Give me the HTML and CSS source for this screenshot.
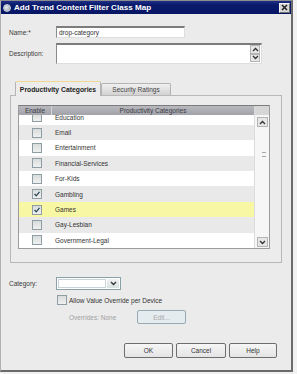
FILE: index.html
```html
<!DOCTYPE html>
<html lang="en">
<head>
    <meta charset="UTF-8">
    <title>Add Trend Content Filter Class Map</title>
    <link rel="stylesheet" href="styles.css">
</head>
<body>
    <div class="window">
        <div class="titlebar">
            <span class="app-icon"></span>
            <span class="title">Add Trend Content Filter Class Map</span>
            <span class="close-btn">
                <svg width="7" height="7" viewBox="0 0 7 7"><path d="M1 1 L6 6 M6 1 L1 6" stroke="#222" stroke-width="1.6"/></svg>
            </span>
        </div>

        <div class="content">
            <div class="field name-row">
                <span class="field-label">Name:*</span>
                <div class="text-input">drop-category</div>
            </div>

            <div class="field desc-row">
                <span class="field-label">Description:</span>
                <div class="text-area">
                    <div class="spin">
                        <span class="spin-btn">
                            <svg width="7" height="5" viewBox="0 0 7 5"><path d="M1 4 L3.5 1.5 L6 4" fill="none" stroke="#333" stroke-width="1.3"/></svg>
                        </span>
                        <span class="spin-btn">
                            <svg width="7" height="5" viewBox="0 0 7 5"><path d="M1 1 L3.5 3.5 L6 1" fill="none" stroke="#333" stroke-width="1.3"/></svg>
                        </span>
                    </div>
                </div>
            </div>

            <!-- Tabs -->
            <div class="tab-strip">
                <div class="tab active">Productivity Categories</div>
                <div class="tab">Security Ratings</div>
            </div>
            <div class="tab-panel">
                <div class="grid">
                    <div class="list-col">
                        <div class="grid-head">
                            <div class="head-enable">Enable</div>
                            <div class="head-name">Productivity Categories</div>
                        </div>
                        <div class="rows">
                            <div class="row first"><span class="cell-check"><span class="check"></span></span><span class="cell-name">Education</span></div>
                            <div class="row alt"><span class="cell-check"><span class="check"></span></span><span class="cell-name">Email</span></div>
                            <div class="row"><span class="cell-check"><span class="check"></span></span><span class="cell-name">Entertainment</span></div>
                            <div class="row alt"><span class="cell-check"><span class="check"></span></span><span class="cell-name">Financial-Services</span></div>
                            <div class="row"><span class="cell-check"><span class="check"></span></span><span class="cell-name">For-Kids</span></div>
                            <div class="row alt"><span class="cell-check"><span class="check checked"><svg width="8" height="8" viewBox="0 0 8 8"><path d="M1.5 4 L3.3 5.8 L6.5 1.8" fill="none" stroke="#2b4a5a" stroke-width="1.3"/></svg></span></span><span class="cell-name">Gambling</span></div>
                            <div class="row selected"><span class="cell-check"><span class="check checked"><svg width="8" height="8" viewBox="0 0 8 8"><path d="M1.5 4 L3.3 5.8 L6.5 1.8" fill="none" stroke="#2b4a5a" stroke-width="1.3"/></svg></span></span><span class="cell-name">Games</span></div>
                            <div class="row alt"><span class="cell-check"><span class="check"></span></span><span class="cell-name">Gay-Lesbian</span></div>
                            <div class="row"><span class="cell-check"><span class="check"></span></span><span class="cell-name">Government-Legal</span></div>
                        </div>
                    </div>
                    <div class="scroll-col">
                        <div class="scroll-corner"></div>
                        <div class="scrollbar">
                            <span class="scroll-btn">
                                <svg width="7" height="5" viewBox="0 0 7 5"><path d="M1 4 L3.5 1.5 L6 4" fill="none" stroke="#333" stroke-width="1.3"/></svg>
                            </span>
                            <span class="grip"></span>
                            <span class="scroll-btn">
                                <svg width="7" height="5" viewBox="0 0 7 5"><path d="M1 1 L3.5 3.5 L6 1" fill="none" stroke="#333" stroke-width="1.3"/></svg>
                            </span>
                        </div>
                    </div>
                </div>
            </div>

            <div class="field category-row">
                <span class="field-label">Category:</span>
                <div class="combo">
                    <span class="combo-field"></span>
                    <span class="combo-btn">
                        <svg width="7" height="5" viewBox="0 0 7 5"><path d="M1 1 L3.5 3.5 L6 1" fill="none" stroke="#333" stroke-width="1.3"/></svg>
                    </span>
                </div>
            </div>

            <div class="override-check">
                <span class="check"></span>
                <span>Allow Value Override per Device</span>
            </div>

            <div class="overrides-row">
                <span class="overrides-text">Overrides: None</span>
                <span class="btn edit-btn">Edit...</span>
            </div>

            <div class="button-row">
                <span class="btn ok-btn">OK</span>
                <span class="btn cancel-btn">Cancel</span>
                <span class="btn help-btn">Help</span>
            </div>
        </div>
    </div>
</body>
</html>
```

FILE: styles.css
```css
/* Global */
* {
    margin: 0;
    padding: 0;
    box-sizing: border-box;
}

body {
    font-family: 'Liberation Sans', Arial, sans-serif;
    font-size: 6.5px;
    color: #3a3a3a;
    background-color: #f1f1f1;
    width: 297px;
    height: 374px;
    overflow: hidden;
}

/* Window frame */
.window {
    width: 293px;
    height: 372px;
    background-color: #ebebeb;
    border-top: 1px solid #8c8c8c;
    border-left: 1px solid #b0b0b0;
    border-right: 2px solid #6a6a6a;
    border-bottom: 2px solid #6a6a6a;
    display: flex;
    flex-direction: column;
}

.titlebar {
    height: 13px;
    background: linear-gradient(#1d2f86, #0a1a6c 30%, #071664);
    display: flex;
    align-items: center;
    padding: 0 1px 0 2px;
    color: #fff;
}

.app-icon {
    width: 8px;
    height: 8px;
    border-radius: 50%;
    background: radial-gradient(circle at 40% 40%, #e8eef2, #8a99a8);
    border: 1px solid #c7d0d8;
}

.title {
    flex: 1;
    margin-left: 3px;
    font-weight: bold;
    font-size: 8.1px;
}

.close-btn {
    width: 11px;
    height: 10px;
    background-color: #d6d6d6;
    border: 1px solid #f4f4f4;
    border-right-color: #707070;
    border-bottom-color: #707070;
    display: flex;
    align-items: center;
    justify-content: center;
}

.content {
    flex: 1;
    display: flex;
    flex-direction: column;
}

/* Form fields */
.field {
    display: flex;
    align-items: center;
    padding-left: 8px;
}

.field-label {
    width: 47px;
}

.name-row {
    margin-top: 12px;
}

.text-input {
    width: 129px;
    height: 12px;
    background-color: #fff;
    border-top: 2px solid #7c7c7c;
    border-left: 1px solid #8a8a8a;
    border-right: 1px solid #dedede;
    border-bottom: 1px solid #dedede;
    padding-left: 2px;
    line-height: 9px;
    color: #333;
}

.desc-row {
    margin-top: 5px;
}

.text-area {
    width: 206px;
    height: 21px;
    background-color: #fff;
    border-top: 2px solid #7c7c7c;
    border-left: 1px solid #8a8a8a;
    border-right: 1px solid #dedede;
    border-bottom: 1px solid #dedede;
    display: flex;
    justify-content: flex-end;
}

.spin {
    display: flex;
    flex-direction: column;
    justify-content: space-between;
    padding: 0 1px 1px 0;
}

.spin-btn,
.scroll-btn {
    width: 10px;
    height: 9px;
    background-color: #e6e6e6;
    border: 1px solid #b4b4b4;
    display: flex;
    align-items: center;
    justify-content: center;
}

/* Tabs */
.tab-strip {
    display: flex;
    align-items: flex-end;
    margin: 17px 0 0 14px;
    height: 14px;
}

.tab {
    height: 12px;
    width: 70px;
    border: 1px solid #b4b4b4;
    border-bottom: none;
    background: linear-gradient(#f0f0f0, #d2d2d2);
    display: flex;
    align-items: center;
    justify-content: center;
    color: #444;
    border-radius: 2px 2px 0 0;
}

.tab.active {
    width: 86px;
    height: 15px;
    margin-bottom: -1px;
    background: #ececec;
    border-top: 1px solid #f0d890;
    font-weight: bold;
    font-size: 6.8px;
    color: #222;
    position: relative;
}

.tab-panel {
    margin: 0 9px 0 9px;
    height: 168px;
    border: 1px solid #b8b8b8;
    background-color: #ececec;
    padding: 9px 11px 13px 7px;
}

/* Category grid */
.grid {
    height: 144px;
    display: flex;
    border: 1px solid #9c9c9c;
    border-top-color: #7c7c7c;
    background-color: #fff;
}

.list-col {
    flex: 1;
    display: flex;
    flex-direction: column;
}

.grid-head {
    display: flex;
    height: 9px;
    background: linear-gradient(#b8b8be, #a2a2aa);
    color: #3c3c44;
    line-height: 9px;
}

.head-enable {
    width: 33px;
    text-align: center;
    border-right: 1px solid #d4d4d8;
}

.head-name {
    flex: 1;
    text-align: center;
}

.rows {
    flex: 1;
    overflow: hidden;
}

.row {
    height: 15.4px;
    display: flex;
    align-items: center;
    background-color: #fff;
}

.row.first {
    margin-top: -5.5px;
}

.row.alt {
    background-color: #e9e9e9;
}

.row.selected {
    background-color: #f8f8a4;
}

.cell-check {
    width: 33px;
    display: flex;
    justify-content: center;
    padding-left: 2px;
}

.cell-name {
    padding-left: 3px;
    color: #333;
}

.check {
    width: 10px;
    height: 10px;
    border: 1px solid #8e9ea2;
    background: linear-gradient(#d8dcdc, #f0f0f0);
    display: flex;
    align-items: center;
    justify-content: center;
}

/* Scrollbar */
.scroll-col {
    width: 15px;
    display: flex;
    flex-direction: column;
    border-left: 1px solid #dcdcdc;
}

.scroll-corner {
    height: 9px;
    background-color: #d6d6d6;
}

.scrollbar {
    flex: 1;
    background-color: #f6f6f6;
    display: flex;
    flex-direction: column;
    align-items: center;
    padding: 2px 0 1px;
}

.scroll-btn {
    width: 11px;
    height: 10px;
}

.grip {
    width: 4px;
    height: 5px;
    margin: 25px 0 0 4px;
    border-top: 1px solid #a8a8a8;
    border-bottom: 1px solid #a8a8a8;
    flex: 0 0 auto;
}

.grip + .scroll-btn {
    margin-top: auto;
}

/* Category combo */
.category-row {
    margin-top: 14px;
}

.combo {
    width: 65px;
    height: 13px;
    display: flex;
    border: 1px solid #8aa0a8;
    background-color: #fff;
    padding: 1px;
}

.combo-field {
    flex: 1;
    border: 1px solid #c8d4d8;
    margin-right: 1px;
}

.combo-btn {
    width: 12px;
    background: linear-gradient(#eef2f2, #d8e0e0);
    display: flex;
    align-items: center;
    justify-content: center;
}

.override-check {
    display: flex;
    align-items: center;
    margin: 5px 0 0 56px;
    color: #333;
}

.override-check .check {
    margin-right: 2px;
}

.overrides-row {
    display: flex;
    align-items: center;
    margin: 5px 0 0 68px;
}

.overrides-text {
    width: 68px;
    color: #a0a0a0;
}

/* Buttons */
.btn {
    height: 15px;
    display: flex;
    align-items: center;
    justify-content: center;
    border: 1px solid #6e6e6e;
    border-radius: 2px;
    background: linear-gradient(#f6f6f6, #e4e4e4);
    color: #333;
}

.edit-btn {
    width: 49px;
    height: 14px;
    background: #e4ecef;
    border-color: #98aab2;
    color: #a8a8a8;
}

.button-row {
    display: flex;
    justify-content: flex-end;
    gap: 3px;
    margin: 19px 14px 0 0;
}

.ok-btn {
    width: 49px;
}

.cancel-btn {
    width: 50px;
}

.help-btn {
    width: 48px;
}
```
